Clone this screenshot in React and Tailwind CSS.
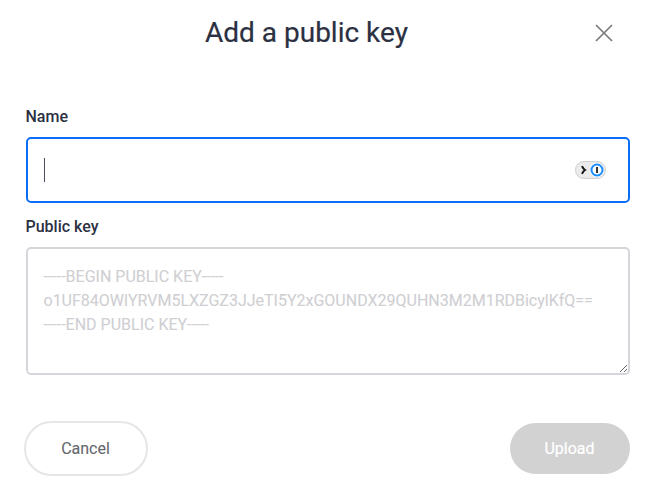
export default function App() {
  return (
    <div className="h-[496px] w-[659px] overflow-hidden bg-white pl-[26px] pr-[29px] font-['Roboto',sans-serif] text-base text-[#2b3042]">
      <header className="flex h-[66px] items-center justify-between">
        <h1 className="ml-[179px] whitespace-nowrap text-[28px] leading-8 [-webkit-text-stroke:0.2px]">Add a public key</h1>
        <button aria-label="Close" className="mr-[16px]">
          <svg width="20" height="20" viewBox="0 0 20 20" fill="none" stroke="#7b7b7b" strokeWidth="1.7">
            <path d="M2 2l16 16M18 2L2 18" />
          </svg>
        </button>
      </header>
      <label className="-ml-[0.5px] mt-[40px] block h-[31px] font-medium leading-[21px]">Name</label>
      <div className="flex h-[66px] items-center justify-between rounded-[5px] border-2 border-[#0b6ef6] pl-4 pr-[22px]">
        <span className="h-6 w-px bg-[#4a4d5e]" />
        <svg width="31" height="18" viewBox="0 0 31 18" fill="none">
          <rect x="0.5" y="0.5" width="30" height="17" rx="8.5" fill="#ebebeb" stroke="#cfcfcf" />
          <path d="M7 5.2Q8.2 7.8 10 9Q8.2 10.2 7 12.8" stroke="#111" strokeWidth="2" />
          <circle cx="22" cy="9" r="7" fill="#fff" />
          <circle cx="22" cy="9" r="5.5" fill="#fff" stroke="#168cff" strokeWidth="2" />
          <path d="M22 6v6" stroke="#333" strokeWidth="2" />
        </svg>
      </div>
      <label className="-ml-[0.5px] mt-[13px] block h-[31px] font-medium leading-[21px]">Public key</label>
      <textarea
        className="block h-[128px] w-full resize rounded-[5px] border-2 border-[#d5d5dc] px-[15.5px] py-4 leading-6 [-webkit-text-stroke:0.1px] placeholder:text-[#cfcfd3]"
        placeholder={"-----BEGIN PUBLIC KEY-----\no1UF84OWlYRVM5LXZGZ3JJeTI5Y2xGOUNDX29QUHN3M2M1RDBicylKfQ==\n-----END PUBLIC KEY-----"}
      />
      <footer className="mt-[46px] flex items-center justify-between">
        <button className="-ml-[2px] h-[55px] w-[124px] rounded-full border-2 border-[#e6e6e6] pr-px text-[#66676e] [-webkit-text-stroke:0.1px]">Cancel</button>
        <button className="h-[51px] w-[120px] rounded-full bg-[#d2d2d2] pr-px text-white [-webkit-text-stroke:0.2px]">Upload</button>
      </footer>
    </div>
  );
}
